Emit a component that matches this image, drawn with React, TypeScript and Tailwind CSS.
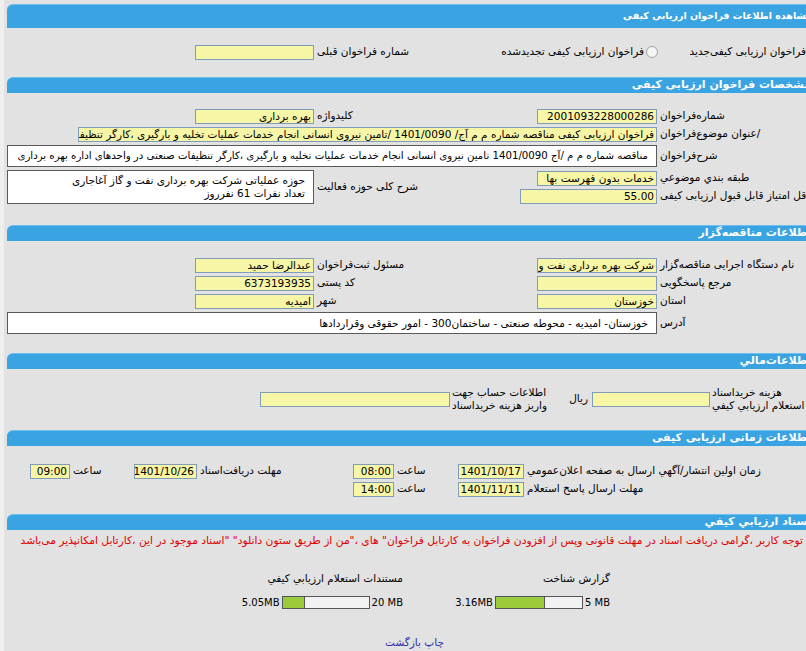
import React from "react";

type P = { className?: string; children?: React.ReactNode };

const Inp = ({ className = "", children }: P) => (
  <div
    className={
      "h-[15px] shrink-0 border border-[#7f9db9] bg-[#f7f5a6] px-[2px] text-[10.5px] leading-[13px] whitespace-nowrap overflow-hidden " +
      className
    }
  >
    {children}
  </div>
);

const Lbl = ({ className = "", children }: P) => (
  <div className={"shrink-0 flex justify-end whitespace-nowrap pl-[3px] " + className}>{children}</div>
);

const Box = ({ className = "", children }: P) => (
  <div className={"shrink-0 border border-[#5a5a5a] bg-white pr-[8px] whitespace-nowrap overflow-hidden " + className}>
    {children}
  </div>
);

const Head = ({ children, className = "" }: P) => (
  <div
    className={
      "bg-[#3aa4e2] border-t border-[#6cc0ee] rounded-tl-[6px] text-white font-bold flex items-center whitespace-nowrap " +
      className
    }
  >
    {children}
  </div>
);

const Radio = ({ className = "" }: P) => (
  <div className={"w-[12px] h-[12px] shrink-0 rounded-full border border-[#a0a0a0] bg-[#f6f6f6] " + className} />
);

const Bar = ({ used, total, pct }: { used: string; total: string; pct: number }) => (
  <div className="flex items-center h-[16px] whitespace-nowrap text-[10px]">
    <span dir="ltr">{total}</span>
    <div dir="ltr" className="w-[88px] h-[13px] border border-[#555] bg-[#f2f2f2] mx-[2px] shrink-0">
      <div className="h-full bg-[#9acb3a] border-r border-[#555]" style={{ width: pct + "%" }} />
    </div>
    <span dir="ltr">{used}</span>
  </div>
);

export default function App() {
  return (
    <div className="w-[806px] h-[651px] overflow-hidden bg-[#efefef] font-['DejaVu_Sans',sans-serif] text-[10.5px] text-black">
      <div dir="rtl" className="w-[810px] ml-[4px] h-[651px] bg-[#e2e2e2] pl-[3px] pt-[4px]">
        {/* Section 1 */}
        <Head className="h-[24px] text-[9.5px] pr-[2px]">مشاهده اطلاعات فراخوان ارزیابی کیفی</Head>
        <div className="pt-[16px] pb-[17px]">
          <div className="flex items-center h-[16px]">
            <div className="w-[154px] shrink-0 flex items-center gap-[2px]">
              <Radio className="mr-[-6px]" />
              <span className="whitespace-nowrap">فراخوان ارزیابی کیفی‌جدید</span>
            </div>
            <div className="w-[250px] shrink-0 flex items-center gap-[2px]">
              <Radio className="mr-[2px]" />
              <span className="whitespace-nowrap">فراخوان ارزیابی کیفی تجدیدشده</span>
            </div>
            <Lbl className="w-[96px]">شماره فراخوان قبلی</Lbl>
            <Inp className="w-[119px]" />
          </div>
        </div>

        {/* Section 2 */}
        <Head className="h-[16px] text-[11px] pr-[3px]">مشخصات فراخوان ارزیابی کیفی</Head>
        <div className="pt-[14px] pb-[20px]">
          <div className="flex items-center h-[18px]">
            <Lbl className="w-[157px]">شماره‌فراخوان</Lbl>
            <Inp className="w-[120px]">2001093228000286</Inp>
            <div className="w-[127px] shrink-0" />
            <Lbl className="w-[96px]">کلیدواژه</Lbl>
            <Inp className="w-[119px]">بهره برداری</Inp>
          </div>
          <div className="flex items-center h-[18px]">
            <Lbl className="w-[157px]">/عنوان موضوع‌فراخوان</Lbl>
            <Inp className="w-[579px]">
              فراخوان ارزیابی کیفی مناقصه شماره م م آج/ 1401/0090 /تامین نیروی انسانی انجام خدمات عملیات تخلیه و بارگیری ،کارگر تنظیفات صنعتی در واحدهای اداره بهره برداری
            </Inp>
          </div>
          <div className="flex items-center h-[26px]">
            <Lbl className="w-[157px]">شرح‌فراخوان</Lbl>
            <Box className="w-[650px] h-[22px] leading-[20px] text-[10.2px]">
              مناقصه شماره م م /آج 1401/0090 تامین نیروی انسانی انجام خدمات عملیات تخلیه و بارگیری ،کارگر تنظیفات صنعتی در واحدهای اداره بهره برداری
            </Box>
          </div>
          <div className="flex items-center">
            <div className="w-[404px] shrink-0">
              <div className="flex items-center h-[18px]">
                <Lbl className="w-[157px]">طبقه بندي موضوعي</Lbl>
                <Inp className="w-[120px]">خدمات بدون فهرست بها</Inp>
              </div>
              <div className="flex items-center h-[18px]">
                <Lbl className="w-[157px]">حداقل امتیاز قابل قبول ارزیابی کیفی</Lbl>
                <Inp className="w-[137px]">55.00</Inp>
              </div>
            </div>
            <Lbl className="w-[96px]">شرح کلی حوزه فعالیت</Lbl>
            <Box className="w-[307px] h-[34px] leading-[13px] pt-[3px]">
              <div>حوزه عملیاتی شرکت بهره برداری نفت و گاز آغاجاری</div>
              <div>تعداد نفرات 61 نفرروز</div>
            </Box>
          </div>
        </div>

        {/* Section 3 */}
        <Head className="h-[16px] text-[11px] pr-[3px]">اطلاعات مناقصه‌گزار</Head>
        <div className="pt-[15px] pb-[17px]">
          <div className="flex items-center h-[18px]">
            <Lbl className="w-[157px]">نام دستگاه اجرایی مناقصه‌گزار</Lbl>
            <Inp className="w-[120px]">شرکت بهره برداری نفت و گاز آغاجاری</Inp>
            <div className="w-[127px] shrink-0" />
            <Lbl className="w-[96px]">مسئول ثبت‌فراخوان</Lbl>
            <Inp className="w-[119px]">عبدالرضا حمید</Inp>
          </div>
          <div className="flex items-center h-[18px]">
            <Lbl className="w-[157px]">مرجع پاسخگویی</Lbl>
            <Inp className="w-[120px]" />
            <div className="w-[127px] shrink-0" />
            <Lbl className="w-[96px]">کد پستی</Lbl>
            <Inp className="w-[119px]">6373193935</Inp>
          </div>
          <div className="flex items-center h-[18px]">
            <Lbl className="w-[157px]">استان</Lbl>
            <Inp className="w-[120px]">خوزستان</Inp>
            <div className="w-[127px] shrink-0" />
            <Lbl className="w-[96px]">شهر</Lbl>
            <Inp className="w-[119px]">امیدیه</Inp>
          </div>
          <div className="flex items-center h-[26px]">
            <Lbl className="w-[157px]">آدرس</Lbl>
            <Box className="w-[650px] h-[22px] leading-[20px]">
              خوزستان- امیدیه - محوطه صنعتی - ساختمان300 - امور حقوقی وقراردادها
            </Box>
          </div>
        </div>

        {/* Section 4 */}
        <Head className="h-[16px] text-[11px] pr-[3px]">اطلاعات‌مالي</Head>
        <div className="pt-[15px] pb-[16px]">
          <div className="flex items-center h-[30px]">
            <div className="w-[104px] shrink-0 flex flex-col items-end leading-[13px] whitespace-nowrap pl-[2px]">
              <div>هزینه خریداسناد</div>
              <div>استعلام ارزیابي کیفي</div>
            </div>
            <Inp className="w-[118px]" />
            <div className="w-[62px] shrink-0 pr-[4px]">ریال</div>
            <div className="w-[80px] shrink-0 flex flex-col items-end leading-[13px] whitespace-nowrap pl-[2px]">
              <div>اطلاعات حساب جهت</div>
              <div>واریز هزینه خریداسناد</div>
            </div>
            <Inp className="w-[190px]" />
          </div>
        </div>

        {/* Section 5 */}
        <Head className="h-[16px] text-[11px] pr-[3px]">اطلاعات زمانی ارزیابی کیفی</Head>
        <div className="pt-[16px] pb-[16px]">
          <div className="flex items-center h-[18px]">
            <Lbl className="w-[290px]">زمان اولین انتشار/آگهي ارسال به صفحه اعلان‌عمومي</Lbl>
            <Inp className="w-[66px]">1401/10/17</Inp>
            <Lbl className="w-[64px]">ساعت</Lbl>
            <Inp className="w-[41px]">08:00</Inp>
            <div className="w-[80px] shrink-0" />
            <Lbl className="w-[76px]">مهلت دریافت‌اسناد</Lbl>
            <Inp className="w-[63px]">1401/10/26</Inp>
            <Lbl className="w-[64px]">ساعت</Lbl>
            <Inp className="w-[40px]">09:00</Inp>
          </div>
          <div className="flex items-center h-[18px]">
            <Lbl className="w-[290px]">مهلت ارسال پاسخ استعلام</Lbl>
            <Inp className="w-[66px]">1401/11/11</Inp>
            <Lbl className="w-[64px]">ساعت</Lbl>
            <Inp className="w-[41px]">14:00</Inp>
          </div>
        </div>

        {/* Section 6 */}
        <Head className="h-[16px] text-[11px] pr-[3px]">اسناد ارزیابي کیفي</Head>
        <div className="pt-[3px]">
          <div className="h-[16px] leading-[16px] text-[10.7px] text-[#e00000] whitespace-nowrap overflow-hidden pr-[11px]">
            توجه کاربر ،گرامی دریافت اسناد در مهلت قانونی وپس از افزودن فراخوان به کارتابل فراخوان" های ،"من از طریق ستون دانلود" "اسناد موجود در این ،کارتابل امکانپذیر می‌باشد
          </div>
          <div className="flex pr-[204px] mt-[21px]">
            <div className="w-[207px] shrink-0">
              <div className="h-[16px] leading-[16px]">گزارش شناخت</div>
              <div className="mt-[8px]">
                <Bar total="5 MB" used="3.16MB" pct={57} />
              </div>
            </div>
            <div className="w-[207px] shrink-0">
              <div className="h-[16px] leading-[16px]">مستندات استعلام ارزیابي کیفي</div>
              <div className="mt-[8px]">
                <Bar total="20 MB" used="5.05MB" pct={26} />
              </div>
            </div>
          </div>
          <div className="mt-[24px] h-[16px] leading-[16px] text-center text-[#2f2fb0] pl-[8px]">
            <span>چاپ</span> <span>بازگشت</span>
          </div>
        </div>
      </div>
    </div>
  );
}
